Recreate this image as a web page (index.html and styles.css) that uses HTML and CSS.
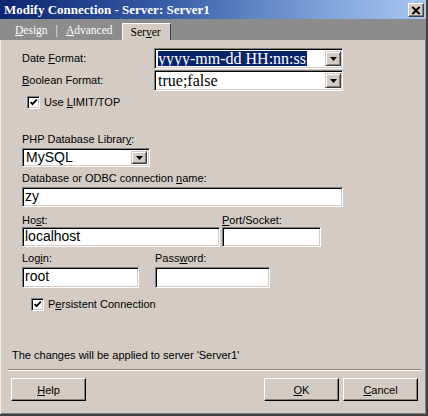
FILE: index.html
```html
<!DOCTYPE html>
<html>
<head>
<meta charset="utf-8">
<link rel="stylesheet" href="styles.css">
</head>
<body>
<div class="win">
  <div class="titlebar">
    <span class="title-text">Modify Connection - Server: Server1</span>
    <span class="close"><svg width="10" height="9" viewBox="0 0 10 9"><path d="M1 1 L8 8 M2 1 L9 8 M8 1 L1 8 M9 1 L2 8" stroke="#000" stroke-width="1.2" fill="none"/></svg></span>
  </div>
  <div class="tabs">
    <span class="tab-off"><u>D</u>esign</span>
    <span class="tab-sep">|</span>
    <span class="tab-off"><u>A</u>dvanced</span>
    <span class="tab-on">Ser<u>v</u>er</span>
  </div>
  <div class="panel">
    <div class="form">
      <div class="row row-first">
        <span class="row-label">Date <u>F</u>ormat:</span>
        <div class="select wide">
          <span class="select-text serif"><span class="hl">yyyy-mm-dd HH:nn:ss</span></span>
          <span class="drop"><svg width="7" height="4" viewBox="0 0 7 4"><path d="M0 0 H7 L3.5 4 Z" fill="#000"/></svg></span>
        </div>
      </div>
      <div class="row row-second">
        <span class="row-label"><u>B</u>oolean Format:</span>
        <div class="select wide">
          <span class="select-text serif">true;false</span>
          <span class="drop"><svg width="7" height="4" viewBox="0 0 7 4"><path d="M0 0 H7 L3.5 4 Z" fill="#000"/></svg></span>
        </div>
      </div>
      <div class="check check-limit">
        <span class="box"><svg width="9" height="9" viewBox="0 0 9 9"><path d="M1.5 4 L3.5 6.2 L7.8 1.6" stroke="#000" stroke-width="1.8" fill="none"/></svg></span>
        <span class="label">Use <u>L</u>IMIT/TOP</span>
      </div>
      <div class="group group-php">
        <div class="label">PHP Database Librar<u>y</u>:</div>
        <div class="select lib">
          <span class="select-text sans">MySQL</span>
          <span class="drop"><svg width="7" height="4" viewBox="0 0 7 4"><path d="M0 0 H7 L3.5 4 Z" fill="#000"/></svg></span>
        </div>
      </div>
      <div class="group group-db">
        <div class="label">Database or ODBC connection <u>n</u>ame:</div>
        <div class="input full">zy</div>
      </div>
      <div class="pair pair-host">
        <div class="group">
          <div class="label">Ho<u>s</u>t:</div>
          <div class="input host">localhost</div>
        </div>
        <div class="group">
          <div class="label"><u>P</u>ort/Socket:</div>
          <div class="input port"></div>
        </div>
      </div>
      <div class="pair pair-login">
        <div class="group">
          <div class="label">Log<u>i</u>n:</div>
          <div class="input login">root</div>
        </div>
        <div class="group">
          <div class="label">Pass<u>w</u>ord:</div>
          <div class="input password"></div>
        </div>
      </div>
      <div class="check check-persist">
        <span class="box"><svg width="9" height="9" viewBox="0 0 9 9"><path d="M1.5 4 L3.5 6.2 L7.8 1.6" stroke="#000" stroke-width="1.8" fill="none"/></svg></span>
        <span class="label">P<u>e</u>rsistent Connection</span>
      </div>
    </div>
    <div class="footer">
      <div class="message">The changes will be applied to server 'Server1'</div>
      <div class="separator"></div>
      <div class="buttons">
        <span class="btn"><u>H</u>elp</span>
        <span class="spacer"></span>
        <span class="btn"><u>O</u>K</span>
        <span class="btn"><u>C</u>ancel</span>
      </div>
    </div>
  </div>
</div>
</body>
</html>
```
FILE: styles.css
```css
* { box-sizing: border-box; }
html, body { margin: 0; padding: 0; }
body { width: 428px; height: 416px; overflow: hidden; background: #d4ccc4; font-family: "Liberation Sans", Arial, sans-serif; font-size: 11px; color: #000; }

.win {
  width: 428px; height: 416px;
  display: flex; flex-direction: column;
  background: #d4ccc4;
  border-right: 2px solid #404040;
  border-bottom: 2px solid #404040;
  box-shadow: inset -1px -1px 0 #808080;
}

.titlebar {
  height: 19px; flex: none;
  display: flex; align-items: center;
  background: linear-gradient(to right, #0c2470 0%, #3a5ea8 40%, #7ea0d8 75%, #a8c8f0 100%);
  padding-left: 4px; padding-right: 2px;
}
.title-text {
  font-family: "Liberation Serif", "Times New Roman", serif;
  font-weight: bold; font-size: 13px; color: #fff;
  line-height: 19px;
}
.close {
  margin-left: auto;
  width: 16px; height: 14px;
  display: flex; align-items: center; justify-content: center;
  background: #d4ccc4;
  border: 1px solid; border-color: #fff #404040 #404040 #fff;
  box-shadow: inset -1px -1px 0 #808080;
  margin-top: 1px;
}

.tabs {
  height: 21px; flex: none;
  display: flex; align-items: flex-end;
  background: #8c8c8c;
  font-family: "Liberation Serif", "Times New Roman", serif;
  font-size: 11.5px; color: #fff;
}
.tab-off { line-height: 18px; padding-bottom: 1px; }
.tabs .tab-off:first-child { margin-left: 15px; }
.tab-sep { line-height: 18px; padding-bottom: 1px; margin: 0 8px 0 8px; }
.tab-on {
  margin-left: 9px;
  width: 49px; height: 17px;
  background: #d4ccc4; color: #000;
  border-top: 1px solid #fff; border-left: 1px solid #fff;
  border-right: 1px solid #404040;
  padding-left: 8px; line-height: 16px;
}

.panel { flex: 1; display: flex; flex-direction: column; border-left: 1px solid #f0ece8; }

.form { padding-left: 21px; }

.row { display: flex; align-items: center; height: 21px; }
.row-first { margin-top: 8px; }
.row-second { margin-top: 1px; }
.row-label { width: 132px; line-height: 13px; }

.select {
  display: flex; align-items: center;
  background: #fff;
  border: 1px solid; border-color: #808080 #fff #fff #808080;
  box-shadow: inset 1px 1px 0 #000, inset -1px -1px 0 #d4ccc4;
  padding: 2px 2px 2px 3px;
}
.select.wide { width: 189px; height: 21px; }
.select.lib { width: 128px; height: 19px; margin-top: 2px; }
.select-text { flex: 1; white-space: nowrap; overflow: hidden; }
.serif { font-family: "Liberation Serif", "Times New Roman", serif; font-size: 16px; line-height: 16px; }
.sans { font-family: "Liberation Sans", Arial, sans-serif; font-size: 14px; line-height: 15px; padding-left: 0; }
.hl { background: #0a246a; color: #fff; display: inline-block; line-height: 15px; padding-right: 1px; }
.drop {
  flex: none;
  width: 16px; align-self: stretch;
  display: flex; align-items: center; justify-content: center;
  background: #d4ccc4;
  border: 1px solid; border-color: #d4ccc4 #404040 #404040 #d4ccc4;
  box-shadow: inset 1px 1px 0 #fff, inset -1px -1px 0 #808080;
}
.select.wide .drop { margin-right: -1px; }

.check { display: flex; align-items: center; height: 13px; }
.check-limit { margin-top: 5px; margin-left: 5px; }
.check-persist { margin-top: 10px; margin-left: 9px; }
.box {
  width: 13px; height: 13px; flex: none;
  background: #fff;
  border: 1px solid; border-color: #808080 #fff #fff #808080;
  box-shadow: inset 1px 1px 0 #000, inset -1px -1px 0 #d4ccc4;
  display: flex; align-items: center; justify-content: center;
}
.check .label { margin-left: 4px; line-height: 13px; }

.label { line-height: 13px; white-space: nowrap; }

.group-php { margin-top: 24px; }
.group-db { margin-top: 5px; }
.input {
  height: 20px; margin-top: 2px;
  background: #fff;
  border: 1px solid; border-color: #808080 #fff #fff #808080;
  box-shadow: inset 1px 1px 0 #000, inset -1px -1px 0 #d4ccc4;
  font-size: 14px; line-height: 17px; padding-left: 2px;
}
.input.full { width: 321px; }
.pair { display: flex; }
.pair-host { margin-top: 7px; gap: 2px; }
.pair-host .input { margin-top: 0; }
.input.host { width: 198px; }
.input.port { width: 99px; }
.pair-login { margin-top: 5px; gap: 16px; }
.pair-login .input { height: 21px; }
.input.login { width: 117px; }
.input.password { width: 115px; }

.footer { margin-top: auto; padding-bottom: 13px; }
.message { margin-left: 11px; line-height: 13px; }
.separator { margin: 7px 0 0 7px; width: 413px; border-top: 1px solid #808080; border-bottom: 1px solid #fff; }
.buttons { display: flex; margin-top: 7px; padding-left: 10px; padding-right: 8px; gap: 4px; }
.spacer { flex: 1; }
.btn {
  width: 75px; height: 23px;
  display: flex; align-items: center; justify-content: center;
  background: #d4ccc4;
  border: 1px solid; border-color: #fff #000 #000 #fff;
  box-shadow: inset -1px -1px 0 #808080;
  font-size: 11px;
}
```
